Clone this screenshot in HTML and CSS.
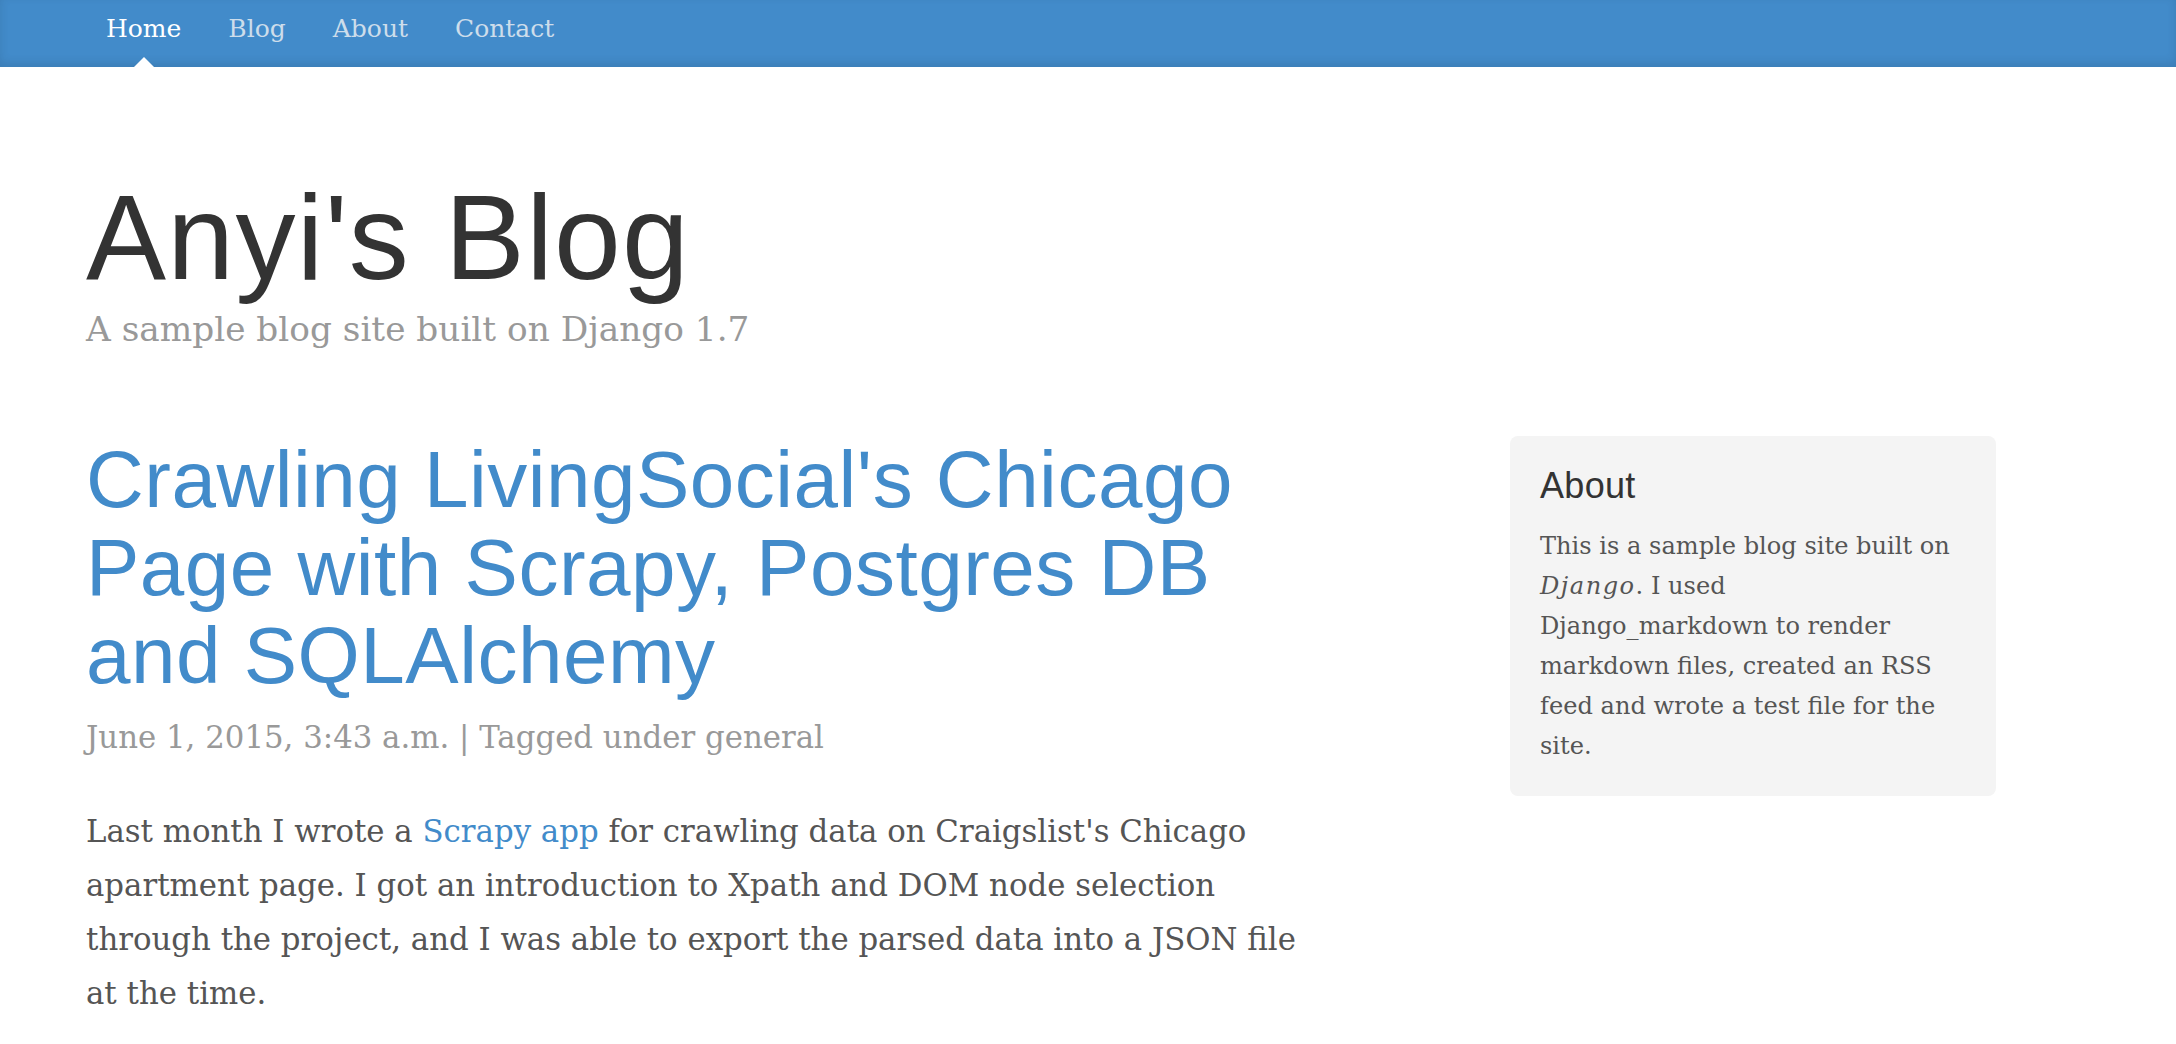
FILE: index.html
```html
<!DOCTYPE html>
<html lang="en">
<head>
<meta charset="utf-8">
<title>Anyi's Blog</title>
<link rel="stylesheet" href="styles.css">
</head>
<body>
<div class="masthead">
  <div class="container">
    <nav class="blog-nav">
      <a class="nav-item active" href="#">Home</a>
      <a class="nav-item" href="#">Blog</a>
      <a class="nav-item" href="#">About</a>
      <a class="nav-item" href="#">Contact</a>
    </nav>
  </div>
</div>
<div class="container">
  <header class="blog-header">
    <h1 class="blog-title">Anyi's Blog</h1>
    <p class="blog-description">A sample blog site built on Django 1.7</p>
  </header>
  <div class="row">
    <main class="blog-main">
      <article class="blog-post">
        <h2 class="blog-post-title"><a href="#">Crawling LivingSocial's Chicago Page with Scrapy, Postgres DB and SQLAlchemy</a></h2>
        <p class="blog-post-meta">June 1, 2015, 3:43 a.m. | Tagged under general</p>
        <p class="post-text">Last month I wrote a <a href="#">Scrapy app</a> for crawling data on Craigslist's Chicago apartment page. I got an introduction to Xpath and DOM node selection through the project, and I was able to export the parsed data into a JSON file at the time.</p>
      </article>
    </main>
    <aside class="blog-sidebar">
      <div class="sidebar-module">
        <h4 class="sidebar-title">About</h4>
        <p class="sidebar-text">This is a sample blog site built on <em>Django</em>. I used Django_markdown to render markdown files, created an RSS feed and wrote a test file for the site.</p>
      </div>
    </aside>
  </div>
</div>
</body>
</html>
```

FILE: styles.css
```css
* { box-sizing: border-box; }

html, body {
  margin: 0;
  padding: 0;
  background: #fff;
}

body {
  font-family: "DejaVu Serif", "Liberation Serif", serif;
  color: #555;
  font-size: 24px;
  line-height: 40px;
}

a { color: #428bca; text-decoration: none; }

.container {
  width: 1940px;
  margin-left: 56px;
  padding: 0 30px;
}

/* masthead */
.masthead {
  height: 67px;
  background-color: #428bca;
  box-shadow: inset 0 -4px 10px rgba(0, 0, 0, 0.1);
}

.blog-nav {
  display: flex;
  gap: 7px;
}

.nav-item {
  position: relative;
  display: block;
  padding: 9px 20px 0;
  height: 67px;
  line-height: 40px;
  font-size: 25px;
  color: #cdddeb;
}

.nav-item.active {
  color: #fff;
}

.nav-item.active::after {
  content: "";
  position: absolute;
  bottom: 0;
  left: 50%;
  margin-left: -10px;
  width: 0;
  height: 0;
  border-left: 10px solid transparent;
  border-right: 10px solid transparent;
  border-bottom: 10px solid #fff;
}

/* header */
.blog-header {
  padding: 40px 0 81px;
}

.blog-title {
  margin: 64px 0 0;
  font-family: "Liberation Sans", Arial, sans-serif;
  font-weight: normal;
  font-size: 120px;
  line-height: 132px;
  letter-spacing: 1.3px;
  color: #333;
}

.blog-description {
  margin: 0;
  font-size: 34.3px;
  line-height: 52px;
  color: #999;
}

/* main row */
.row {
  display: flex;
  align-items: flex-start;
}

.blog-main {
  width: 1233px;
  font-size: 30.8px;
  line-height: 54px;
}

.blog-post-title {
  margin: 0 0 10px;
  font-family: "Liberation Sans", Arial, sans-serif;
  font-weight: normal;
  font-size: 80px;
  line-height: 88px;
  letter-spacing: 0.5px;
}

.blog-post-meta {
  margin: 0 0 40px;
  color: #999;
}

.post-text {
  margin: 0 0 20px;
}

.blog-sidebar {
  width: 486px;
  margin-left: auto;
  margin-right: -30px;
}

.sidebar-module {
  padding: 30px 42px 30px 30px;
  background-color: #f4f4f4;
  border-radius: 8px;
}

.sidebar-title {
  margin: 0 0 20px;
  font-family: "Liberation Sans", Arial, sans-serif;
  font-weight: normal;
  font-size: 36px;
  line-height: 40px;
  letter-spacing: 0.3px;
  color: #333;
}

.sidebar-text {
  margin: 0;
  font-size: 24.1px;
  line-height: 40px;
}

.sidebar-text em {
  letter-spacing: 1.5px;
}
```
